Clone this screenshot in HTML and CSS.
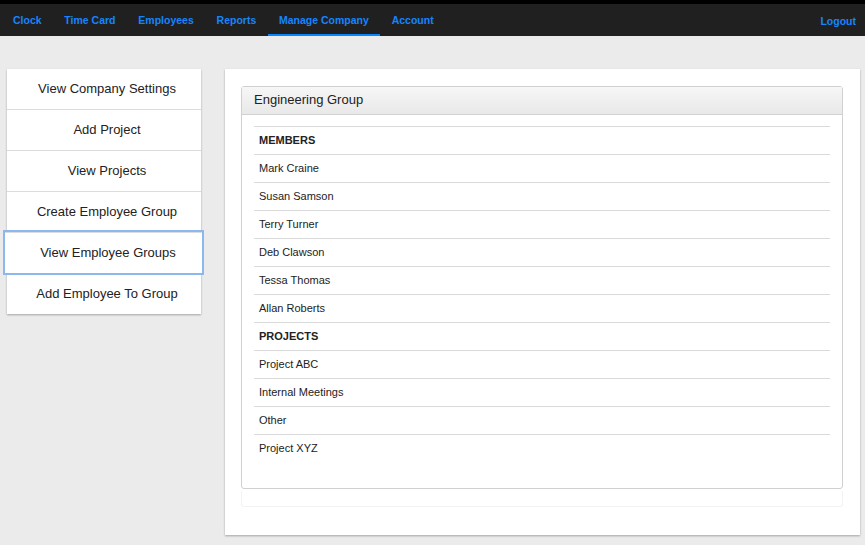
FILE: index.html
```html
<!DOCTYPE html>
<html>
<head>
<meta charset="utf-8">
<link rel="stylesheet" href="styles.css">
</head>
<body>
<header class="navbar">
  <ul class="nav">
    <li><a href="#">Clock</a></li>
    <li><a href="#">Time Card</a></li>
    <li><a href="#">Employees</a></li>
    <li><a href="#">Reports</a></li>
    <li class="active"><a href="#">Manage Company</a></li>
    <li><a href="#">Account</a></li>
  </ul>
  <a class="logout" href="#">Logout</a>
</header>
<main class="main">
  <nav class="menu">
    <a class="menu-item" href="#">View Company Settings</a>
    <a class="menu-item" href="#">Add Project</a>
    <a class="menu-item" href="#">View Projects</a>
    <a class="menu-item" href="#">Create Employee Group</a>
    <a class="menu-item focused" href="#">View Employee Groups</a>
    <a class="menu-item" href="#">Add Employee To Group</a>
  </nav>
  <section class="content">
    <div class="panel">
      <div class="panel-heading">Engineering Group</div>
      <div class="panel-body">
        <div class="row head">MEMBERS</div>
        <div class="row">Mark Craine</div>
        <div class="row">Susan Samson</div>
        <div class="row">Terry Turner</div>
        <div class="row">Deb Clawson</div>
        <div class="row">Tessa Thomas</div>
        <div class="row">Allan Roberts</div>
        <div class="row head">PROJECTS</div>
        <div class="row">Project ABC</div>
        <div class="row">Internal Meetings</div>
        <div class="row">Other</div>
        <div class="row">Project XYZ</div>
      </div>
    </div>
    <div class="well"></div>
  </section>
</main>
</body>
</html>
```
FILE: styles.css
```css
* { box-sizing: border-box; }
html, body { margin: 0; padding: 0; }
body {
  background: #ebebeb;
  font-family: "Liberation Sans", Arial, Helvetica, sans-serif;
  color: #222;
  height: 545px;
  overflow: hidden;
}
a { text-decoration: none; }
.navbar {
  border-top: 4px solid #000;
  background: #202020;
  height: 36px;
  display: flex;
  justify-content: space-between;
  align-items: stretch;
  padding: 0 9px 0 1.6px;
}
.nav {
  list-style: none;
  margin: 0;
  padding: 0;
  display: flex;
}
.nav li {
  display: flex;
  align-items: center;
  padding: 1px 11.4px 0;
  border-bottom: 2px solid transparent;
}
.nav li.active { border-bottom-color: #0a85ff; }
.nav a, .logout {
  color: #1585ff;
  font-weight: bold;
  font-size: 10.5px;
}
.logout {
  display: flex;
  align-items: center;
  padding-top: 1px;
}
.main {
  display: flex;
  align-items: flex-start;
  padding: 33px 5px 0 7px;
  gap: 24px;
}
.menu {
  width: 194px;
  flex: none;
  background: #fff;
  display: flex;
  flex-direction: column;
  box-shadow: 0 1px 2px rgba(0,0,0,0.3);
}
.menu-item {
  height: 41px;
  display: flex;
  align-items: center;
  justify-content: center;
  font-size: 13px;
  color: #222;
  border-top: 1px solid #dcdcdc;
  background: #fff;
  padding: 0 0 1px 6px;
}
.menu-item:first-child { border-top: none; height: 40px; }
.menu-item.focused {
  outline: 2px solid #8cb8ee;
  outline-offset: 0;
  position: relative;
  margin: 0 -1px 0 -2px;
  padding-left: 9px;
}
.content {
  width: 635px;
  height: 466px;
  background: #fff;
  box-shadow: 0 1px 2px rgba(0,0,0,0.3);
  padding: 17px 17px 0 16px;
}
.panel {
  border: 1px solid #d0d0d0;
  border-radius: 3px;
  height: 403px;
}
.panel-heading {
  height: 28px;
  background: linear-gradient(#f6f6f6, #e9e9e9);
  border-bottom: 1px solid #d2d2d2;
  padding: 0 12px 2px;
  display: flex;
  align-items: center;
  font-size: 13px;
  color: #222;
}
.panel-body {
  padding: 11px 12px 0 12px;
}
.row {
  height: 28px;
  border-top: 1px solid #dadada;
  display: flex;
  align-items: center;
  padding: 0 5px 1px;
  font-size: 11px;
  color: #222;
}
.row.head { font-weight: bold; }
.well {
  margin-top: 2px;
  height: 16px;
  border: 1px solid #f3f3f3;
  border-top: none;
  border-radius: 0 0 3px 3px;
}
```
